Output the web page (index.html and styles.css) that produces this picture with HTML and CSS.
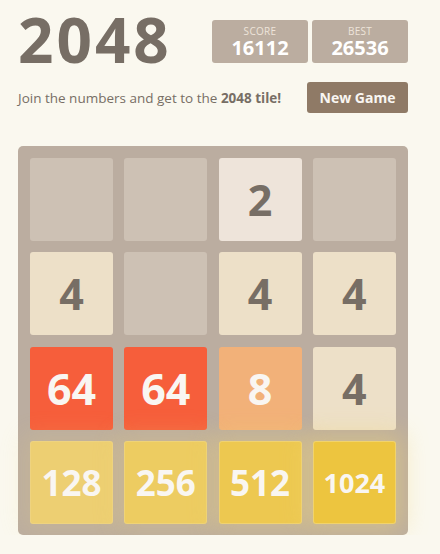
FILE: index.html
```html
<!DOCTYPE html>
<html>
<head>
<meta charset="utf-8">
<link rel="stylesheet" href="styles.css">
</head>
<body>
<div class="container">
  <div class="heading">
    <h1 class="title">2048</h1>
    <div class="scores">
      <div class="score-box"><span class="label">SCORE</span><span class="value">16112</span></div>
      <div class="score-box"><span class="label">BEST</span><span class="value">26536</span></div>
    </div>
  </div>
  <div class="intro">
    <p class="intro-text">Join the numbers and get to the <strong>2048 tile!</strong></p>
    <a class="restart">New Game</a>
  </div>
  <div class="board">
    <div class="cell"></div>
    <div class="cell"></div>
    <div class="cell t2">2</div>
    <div class="cell"></div>
    <div class="cell t4">4</div>
    <div class="cell"></div>
    <div class="cell t4">4</div>
    <div class="cell t4">4</div>
    <div class="cell t64">64</div>
    <div class="cell t64">64</div>
    <div class="cell t8">8</div>
    <div class="cell t4">4</div>
    <div class="cell t128">128</div>
    <div class="cell t256">256</div>
    <div class="cell t512">512</div>
    <div class="cell t1024">1024</div>
  </div>
</div>
</body>
</html>
```
FILE: styles.css
```css
html, body {
  margin: 0;
  padding: 0;
  background: #faf8ef;
  color: #776e65;
  font-family: "Open Sans", "DejaVu Sans", sans-serif;
}
.container {
  width: 390px;
  padding: 0 0 0 18px;
}
.heading {
  display: flex;
  justify-content: space-between;
  align-items: flex-start;
  padding-top: 8px;
}
.title {
  margin: 0;
  font-size: 62px;
  font-weight: 700;
  line-height: 62px;
  letter-spacing: 3px;
}
.scores {
  display: flex;
  gap: 4px;
  margin-top: 12px;
}
.score-box {
  background: #bbada0;
  border-radius: 3px;
  height: 43px;
  padding: 0 14px;
  display: flex;
  flex-direction: column;
  align-items: center;
  box-sizing: border-box;
  min-width: 96px;
}
.score-box .label {
  color: #eee4da;
  font-size: 10px;
  line-height: 12px;
  margin-top: 5px;
  font-weight: 400;
  letter-spacing: 0.3px;
}
.score-box .value {
  color: #ffffff;
  font-size: 20px;
  font-weight: 700;
  line-height: 20px;
  margin-top: 1px;
}
.intro {
  display: flex;
  justify-content: space-between;
  align-items: center;
  margin-top: 12px;
}
.intro-text {
  margin: 0;
  font-size: 13.5px;
  line-height: 20px;
}
.intro-text strong {
  font-weight: 700;
}
.restart {
  display: block;
  background: #8f7a66;
  color: #f9f6f2;
  border-radius: 3px;
  width: 101px;
  height: 31px;
  line-height: 31px;
  text-align: center;
  font-weight: 700;
  font-size: 14px;
}
.board {
  margin-top: 33px;
  background: #bbada0;
  border-radius: 5px;
  width: 390px;
  height: 389px;
  box-sizing: border-box;
  padding: 12px;
  display: grid;
  grid-template-columns: repeat(4, 83px);
  grid-template-rows: repeat(4, 83px);
  gap: 11.3px;
}
.cell {
  background: #cdc1b4;
  border-radius: 3px;
  display: flex;
  align-items: center;
  justify-content: center;
  font-weight: 700;
  font-size: 43px;
  color: #776e65;
}
.t2 { background: #eee4da; }
.t4 { background: #ede0c8; }
.t8 { background: #f2b179; color: #f9f6f2; }
.t64 { background: #f65e3b; color: #f9f6f2; }
.t128 { background: #edcf72; color: #f9f6f2; font-size: 35px; box-shadow: 0 0 23px 8px rgba(243,215,116,0.16), inset 0 0 0 1px rgba(255,255,255,0.1); }
.t256 { background: #edcc61; color: #f9f6f2; font-size: 35px; box-shadow: 0 0 23px 8px rgba(243,215,116,0.24), inset 0 0 0 1px rgba(255,255,255,0.14); }
.t512 { background: #edc850; color: #f9f6f2; font-size: 35px; box-shadow: 0 0 23px 8px rgba(243,215,116,0.32), inset 0 0 0 1px rgba(255,255,255,0.19); }
.t1024 { background: #edc53f; color: #f9f6f2; font-size: 27px; box-shadow: 0 0 23px 8px rgba(243,215,116,0.40), inset 0 0 0 1px rgba(255,255,255,0.24); }
```
